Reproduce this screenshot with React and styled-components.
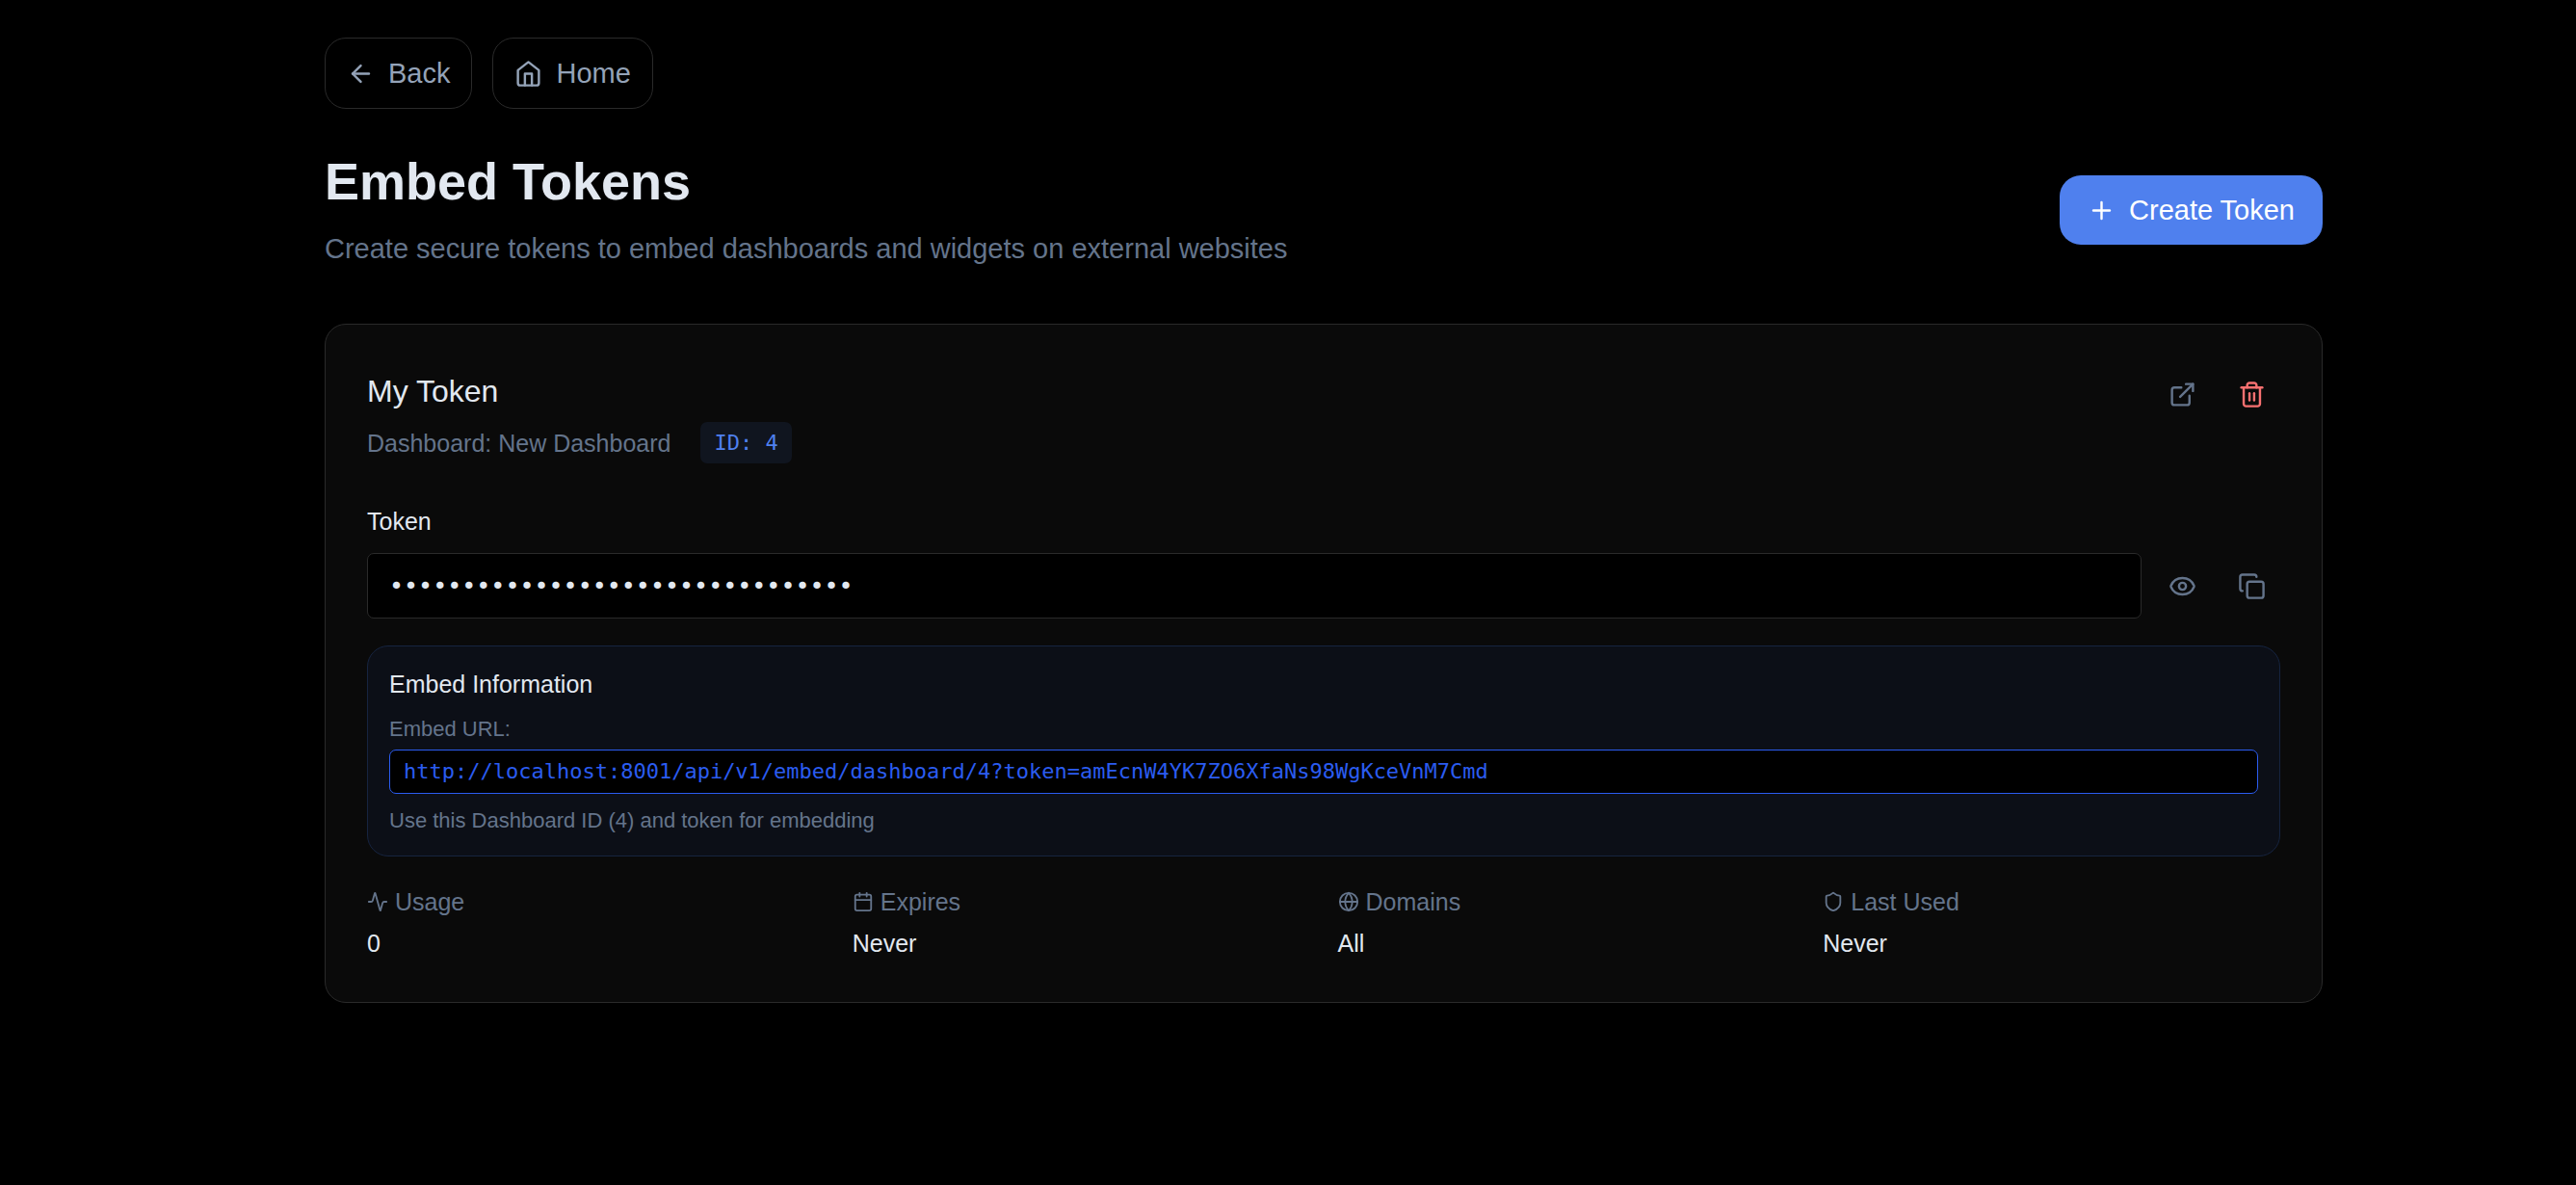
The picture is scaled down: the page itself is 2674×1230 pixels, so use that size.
import React, { useState } from "react";
import styled, { createGlobalStyle } from "styled-components";
import { Activity, ArrowLeft, Calendar, Copy, ExternalLink, Eye, Globe, Plus, Shield } from "lucide-react";

const GlobalStyle = createGlobalStyle`
  *, *::before, *::after { box-sizing: border-box; }
  body {
    margin: 0;
    background: #000;
    color: #e2e8f0;
    font-family: "Liberation Sans", Helvetica, Arial, sans-serif;
    font-size: 29px;
    line-height: 43px;
  }
  h1, h2, h3, p, dl, dd, dt { margin: 0; font-weight: 400; }
  button, input { font: inherit; }
  button { cursor: pointer; }
  svg { display: block; flex: none; }
`;

const mono = `"DejaVu Sans Mono", Menlo, monospace`;

const Page = styled.main`
  padding: 39px 0 58px 74px;
`;

const Container = styled.div`
  max-width: 2074px;
  margin: 0 auto;
`;

const Nav = styled.nav`
  display: flex;
  gap: 21px;
  margin-bottom: 43px;
`;

const NavButton = styled.button`
  display: flex;
  align-items: center;
  gap: 14px;
  padding: 14px 22px;
  border: 1px solid #2a2a2a;
  border-radius: 22px;
  background: transparent;
  color: #94a3b8;
  line-height: 44px;
`;

const Header = styled.header`
  display: flex;
  align-items: center;
  justify-content: space-between;
  margin-bottom: 56px;
`;

const Title = styled.h1`
  margin-bottom: 16px;
  font-size: 54px;
  font-weight: 700;
  line-height: 65px;
`;

const Subtitle = styled.p`
  color: #64748b;
`;

const PrimaryButton = styled.button`
  display: flex;
  align-items: center;
  gap: 14px;
  padding: 14px 29px;
  border: 0;
  border-radius: 22px;
  background: #4f80ee;
  color: #fff;
  line-height: 44px;
`;

const Card = styled.section`
  padding: 43px;
  border: 1px solid #2a2a2a;
  border-radius: 22px;
  background: #0a0a0a;
`;

const CardHeader = styled.div`
  display: flex;
  align-items: flex-start;
  justify-content: space-between;
  margin-bottom: 43px;
`;

const CardTitle = styled.h2`
  margin-bottom: 6px;
  font-size: 32px;
  line-height: 52px;
`;

const Meta = styled.div`
  display: flex;
  align-items: center;
  gap: 31px;
  color: #64748b;
  font-size: 25px;
  line-height: 36px;
`;

const Badge = styled.span`
  padding: 7px 14px;
  border-radius: 7px;
  background: #10151f;
  color: #4f80ee;
  font-family: ${mono};
  font-size: 22px;
  line-height: 29px;
`;

const Row = styled.div`
  display: flex;
  align-items: center;
  gap: ${({ $gap }) => $gap}px;
`;

const IconButton = styled.button`
  display: grid;
  place-items: center;
  flex: none;
  width: 60px;
  height: 58px;
  padding: 0;
  border: 0;
  border-radius: 14px;
  background: transparent;
  color: ${({ $danger }) => ($danger ? "#f87171" : "#64748b")};
`;

const Label = styled.label`
  display: block;
  margin-bottom: 16px;
  font-size: 25px;
  line-height: 34px;
`;

const TokenInput = styled.input`
  flex: 1;
  min-width: 0;
  height: 68px;
  padding: 14px 22px;
  border: 1px solid #2a2a2a;
  border-radius: 7px;
  background: #000;
  color: #e2e8f0;
  font-family: ${mono};
  font-size: 25px;
  line-height: 36px;
`;

const EmbedPanel = styled.section`
  margin: 28px 0 29px;
  padding: 22px;
  border: 1px solid #162440;
  border-radius: 22px;
  background: #0c0f17;
`;

const EmbedTitle = styled.h3`
  margin-bottom: 15px;
  font-size: 25px;
  line-height: 34px;
`;

const Caption = styled.p`
  color: #64748b;
  font-size: 22px;
  line-height: 29px;
`;

const UrlBox = styled.code`
  display: block;
  margin: 7px 0 13px;
  padding: 7px 14px;
  border: 1px solid #2b5cf0;
  border-radius: 7px;
  background: #000;
  color: #2b5cf0;
  font-family: ${mono};
  font-size: 22px;
  line-height: 30px;
  overflow-wrap: anywhere;
`;

const Stats = styled.dl`
  display: grid;
  grid-template-columns: repeat(4, minmax(0, 1fr));
  gap: 29px;
  font-size: 25px;
  line-height: 36px;
`;

const StatLabel = styled.dt`
  display: flex;
  align-items: center;
  gap: 7px;
  margin-bottom: 7px;
  color: #64748b;
`;

const Svg = ({ size = 29, children }) => (
  <svg width={size} height={size} viewBox="0 0 24 24" fill="none" stroke="currentColor"
    strokeWidth="2" strokeLinecap="round" strokeLinejoin="round" aria-hidden="true">
    {children}
  </svg>
);

const HomeIcon = () => (
  <Svg>
    <path d="m3 9 9-7 9 7v11a2 2 0 0 1-2 2H5a2 2 0 0 1-2-2z" />
    <polyline points="9 22 9 12 15 12 15 22" />
  </Svg>
);

const TrashIcon = () => (
  <Svg>
    <path d="M3 6h18" />
    <path d="M19 6v14c0 1-1 2-2 2H7c-1 0-2-1-2-2V6" />
    <path d="M8 6V4c0-1 1-2 2-2h4c1 0 2 1 2 2v2" />
    <path d="M10 11v6" />
    <path d="M14 11v6" />
  </Svg>
);

const TOKEN = "amEcnW4YK7ZO6XfaNs98WgKceVnM7Cmd";
const EMBED_URL = `http://localhost:8001/api/v1/embed/dashboard/4?token=${TOKEN}`;

const stats = [
  { icon: Activity, label: "Usage", value: "0" },
  { icon: Calendar, label: "Expires", value: "Never" },
  { icon: Globe, label: "Domains", value: "All" },
  { icon: Shield, label: "Last Used", value: "Never" },
];

export default function App() {
  const [visible, setVisible] = useState(false);

  return (
    <>
      <GlobalStyle />
      <Page>
        <Container>
          <Nav>
            <NavButton type="button"><ArrowLeft size={29} />Back</NavButton>
            <NavButton type="button"><HomeIcon />Home</NavButton>
          </Nav>
          <Header>
            <div>
              <Title>Embed Tokens</Title>
              <Subtitle>Create secure tokens to embed dashboards and widgets on external websites</Subtitle>
            </div>
            <PrimaryButton type="button"><Plus size={29} />Create Token</PrimaryButton>
          </Header>
          <Card>
            <CardHeader>
              <div>
                <CardTitle>My Token</CardTitle>
                <Meta>
                  <span>Dashboard: New Dashboard</span>
                  <Badge>ID: 4</Badge>
                </Meta>
              </div>
              <Row $gap={12}>
                <IconButton type="button" aria-label="Open"><ExternalLink size={29} /></IconButton>
                <IconButton type="button" aria-label="Delete" $danger><TrashIcon /></IconButton>
              </Row>
            </CardHeader>
            <Label htmlFor="token">Token</Label>
            <Row $gap={12}>
              <TokenInput id="token" readOnly value={visible ? TOKEN : "•".repeat(TOKEN.length)} />
              <IconButton type="button" aria-label="Show token" onClick={() => setVisible(!visible)}>
                <Eye size={29} />
              </IconButton>
              <IconButton type="button" aria-label="Copy token" onClick={() => navigator.clipboard?.writeText(TOKEN)}>
                <Copy size={29} />
              </IconButton>
            </Row>
            <EmbedPanel>
              <EmbedTitle>Embed Information</EmbedTitle>
              <Caption>Embed URL:</Caption>
              <UrlBox>{EMBED_URL}</UrlBox>
              <Caption>Use this Dashboard ID (4) and token for embedding</Caption>
            </EmbedPanel>
            <Stats>
              {stats.map(({ icon: Icon, label, value }) => (
                <div key={label}>
                  <StatLabel><Icon size={22} />{label}</StatLabel>
                  <dd>{value}</dd>
                </div>
              ))}
            </Stats>
          </Card>
        </Container>
      </Page>
    </>
  );
}
